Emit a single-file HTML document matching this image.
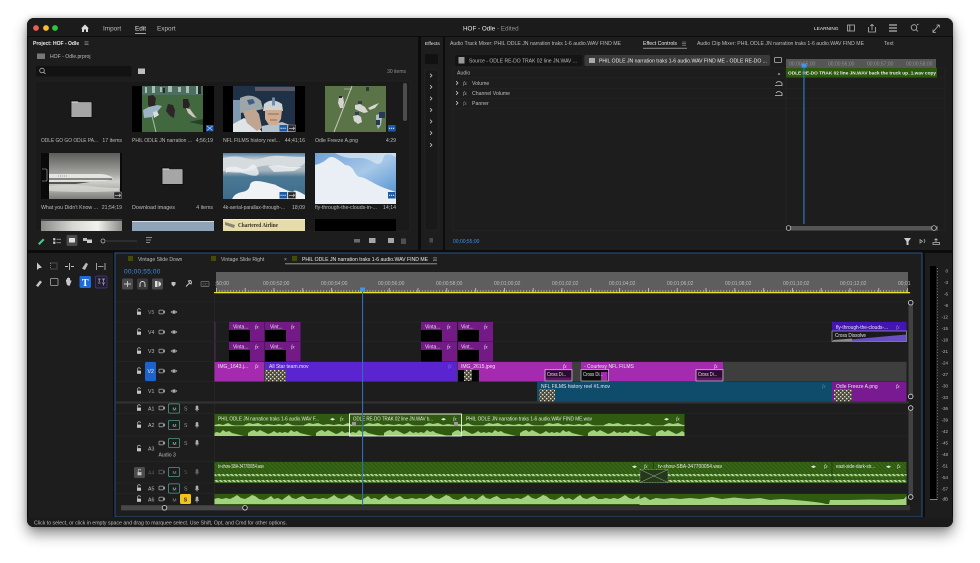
<!DOCTYPE html>
<html><head><meta charset="utf-8"><style>
html,body{margin:0;padding:0;background:#fff;width:980px;height:563px;overflow:hidden}
#win{position:absolute;left:27px;top:18px;width:926px;height:509px;border-radius:7px;background:#0d0d0d;box-shadow:0 7px 14px rgba(0,0,0,.45),0 0 5px rgba(0,0,0,.25)}
svg{position:absolute;left:0;top:0;filter:blur(.28px)}
text{font-family:"Liberation Sans",sans-serif;font-size:5.2px;fill:#bcbcbc;white-space:pre}
.w{fill:#ececec}.d{fill:#909090}.b{fill:#3f8fe6}
.ic{fill:none;stroke:#b5b5b5;stroke-width:.8}
.cl{font-size:5px;fill:#e8e8e8}
</style></head><body><div id="win"></div>
<svg width="980" height="563" viewBox="0 0 980 563" xmlns="http://www.w3.org/2000/svg">
<defs>
<pattern id="tick" width="2.9" height="3" patternUnits="userSpaceOnUse" x="216" y="289"><rect x="0" y="1" width=".6" height="2" fill="#c8c8c8"/></pattern>
<pattern id="tick2" width="28.8" height="4" patternUnits="userSpaceOnUse" x="216" y="288"><rect x="0" y="0" width=".7" height="4" fill="#d4d4d4"/></pattern>
<pattern id="hatch" width="3" height="3" patternUnits="userSpaceOnUse" patternTransform="rotate(-45)"><rect width="3" height="3" fill="#2e5a10"/><rect width="1.2" height="3" fill="#3a6a1a"/></pattern>
<pattern id="hatchL" width="3" height="3" patternUnits="userSpaceOnUse" patternTransform="rotate(-45)"><rect width="3" height="3" fill="#b9d9a0"/><rect width="1.2" height="3" fill="#3f6a20"/></pattern>
<pattern id="wvA" width="68" height="9" patternUnits="userSpaceOnUse" x="214" y="427"><path d="M0 9V6L3 5 6 6 9 3 12 5 15 4 18 6 22 7 26 8 30 9H34V6L37 4 40 3 43 5 46 3 50 5 54 7 57 6 60 4 63 6 66 5 68 6V9Z" fill="#a2d27e"/></pattern>
<pattern id="wvB" width="60" height="4" patternUnits="userSpaceOnUse" x="214" y="422"><path d="M0 4V3L5 2 9 3 14 1 18 3 24 4H30V3L35 1 39 2 44 1 49 3 54 2 60 3V4Z" fill="#a2d27e"/></pattern>
<pattern id="wvC" width="97" height="11" patternUnits="userSpaceOnUse" x="214" y="493"><path d="M0 11V6L4 5 8 6 12 5 16 6 20 4 23 2 27 5 31 6 35 4 38 2 41 3 45 6 50 7 54 5 57 3 60 6 64 5 68 7 72 4 75 2 78 5 82 6 86 4 89 3 93 6 97 6V11Z" fill="#a2d27e"/></pattern>
<pattern id="noise" width="4" height="4" patternUnits="userSpaceOnUse"><rect width="4" height="4" fill="#5c5a4a"/><rect width="1.3" height="1.3" fill="#d8d4c0"/><rect x="2" y="2" width="1.3" height="1.3" fill="#e8e6d8"/><rect x="2.6" y=".3" width="1" height="1" fill="#1c1c18"/><rect x=".3" y="2.6" width="1" height="1" fill="#1c1c18"/></pattern>
<linearGradient id="plane" x1="0" y1="0" x2="0" y2="1"><stop offset="0" stop-color="#5c5c5a"/><stop offset=".45" stop-color="#a4a4a0"/><stop offset=".62" stop-color="#cfcfcb"/><stop offset=".82" stop-color="#a8a8a4"/><stop offset="1" stop-color="#7c7c78"/></linearGradient>
<linearGradient id="sky1" x1="0" y1="0" x2="0" y2="1"><stop offset="0" stop-color="#4d7fa8"/><stop offset=".12" stop-color="#b9c4cc"/><stop offset=".38" stop-color="#a8b4bc"/><stop offset=".52" stop-color="#4b7894"/><stop offset="1" stop-color="#3d6b8c"/></linearGradient>
<linearGradient id="sky2" x1="0" y1="0" x2="1" y2="1"><stop offset="0" stop-color="#6ea2d6"/><stop offset=".5" stop-color="#a8c8e8"/><stop offset="1" stop-color="#4f8fd0"/></linearGradient>
<linearGradient id="strip" x1="0" y1="0" x2="1" y2="0"><stop offset="0" stop-color="#8a8a88"/><stop offset=".4" stop-color="#d8d8d4"/><stop offset=".7" stop-color="#f0f0ec"/><stop offset="1" stop-color="#8a8a88"/></linearGradient>
<g id="lock"><rect x="-2" y="-.4" width="4" height="3.2" fill="#c4c4c4"/><path d="M-1.3 -.4V-2a1.3 1.3 0 0 1 2.6 0" fill="none" stroke="#c4c4c4" stroke-width=".7"/></g>
<g id="cam"><rect x="-3" y="-1.8" width="4.4" height="3.6" rx=".6" fill="none" stroke="#9c9c9c" stroke-width=".8"/><path d="M1.4 -.8L3 -1.6V1.6L1.4 .8Z" fill="#9c9c9c"/></g>
<g id="eye"><path d="M-2.8 0Q0 -2.6 2.8 0Q0 2.6 -2.8 0Z" fill="none" stroke="#c4c4c4" stroke-width=".7"/><circle r="1" fill="#c4c4c4"/></g>
<g id="mic"><rect x="-1.3" y="-3" width="2.6" height="4.2" rx="1.3" fill="#b0b0b0"/><path d="M-2 .4Q0 3 2 .4M0 2V3.2" fill="none" stroke="#b0b0b0" stroke-width=".6"/></g>
<g id="mb"><rect x="-5.5" y="-4.6" width="11" height="9.2" rx="1.2" fill="#1c1c1c" stroke="#4d9a8c" stroke-width=".8"/></g>
<g id="folder"><path d="M0 2.4V.8H7L8 2.4H21V17.4H0Z" fill="#a6a6a6" stroke="#0c0c0c" stroke-width=".8"/><path d="M.6 2.4H20.4" stroke="#e0e0e0" stroke-width=".5"/></g>
<g id="blue"><rect width="7.6" height="6.5" fill="#1b5aa8"/><path d="M1 3.3H6.6" stroke="#cfe2ff" stroke-width="1.2" stroke-dasharray="1.2 .8"/></g>
<g id="blk"><rect width="7.6" height="6.5" fill="#2a2a2a" stroke="#aaa" stroke-width=".4"/><path d="M1 3.3H6.6M5 1.8L6.6 3.3 5 4.8" fill="none" stroke="#ddd" stroke-width=".6"/></g>
<path id="chev" d="M-.9 -1.8L.9 0 -.9 1.8" fill="none" stroke="#c8c8c8" stroke-width=".8"/>
<path id="fxm" d="M0 0H4M0 1.6H4M0 3.2H4" stroke="#9a9a9a" stroke-width=".6"/>
</defs>

<!-- window base -->
<rect x="27" y="18" width="926" height="509" rx="7" fill="#1b1b1b"/>
<!-- panels -->
<rect x="27" y="36" width="926" height="481" fill="#0c0c0c"/>
<rect x="28" y="37" width="390" height="213" fill="#1d1d1d"/>
<rect x="421" y="37" width="22" height="213" fill="#1d1d1d"/>
<rect x="445" y="37" width="507" height="213" fill="#1d1d1d"/>
<rect x="28" y="253" width="85" height="264" fill="#1d1d1d"/>
<rect x="115" y="253" width="807" height="264" fill="#1d1d1d" stroke="#2b5a94" stroke-width=".9"/>
<rect x="925" y="253" width="27" height="264" fill="#1d1d1d"/>
<path d="M27 517H953V520a7 7 0 0 1 -7 7H34a7 7 0 0 1 -7 -7Z" fill="#1b1b1b"/>

<!-- title bar -->
<circle cx="36" cy="28" r="2.9" fill="#ec5f57"/><circle cx="46" cy="28" r="2.9" fill="#f5bd2f"/><circle cx="55" cy="28" r="2.9" fill="#2ac840"/>
<path d="M81 28.5L85 24.5 89 28.5H88V32H86V29.5H84V32H82V28.5Z" fill="#dcdcdc"/>
<text x="103" y="30.3" style="font-size:6.4px">Import</text>
<text x="135" y="30.3" class="w" style="font-size:6.4px">Edit</text><rect x="135" y="33" width="11" height=".7" fill="#ddd"/>
<text x="157" y="30.3" style="font-size:6.4px">Export</text>
<text x="463" y="30.3" class="w" style="font-size:6.3px">HOF - Odle<tspan class="d"> - Edited</tspan></text>
<text x="814" y="30" class="w" style="font-size:4.8px">LEARNING</text>
<rect x="847.5" y="25" width="7" height="6" class="ic"/><path d="M849.8 25V31" class="ic"/>
<path d="M868.5 27V32H875.5V27M872 30V24.5M870.3 26L872 24.3 873.7 26" class="ic"/>
<path d="M889 25H897M889 28H897M889 31H897" stroke="#b5b5b5" stroke-width="1.2"/>
<circle cx="914" cy="27.5" r="2.8" class="ic"/><path d="M916 29.5L918 31.5M917 25L918.5 24" class="ic"/>
<path d="M933 32L939 25M936.5 25H939.3V27.5M933 29.5V32.3H935.8" class="ic"/>

<!-- PROJECT panel -->
<text x="33" y="45" class="w" style="font-weight:bold;font-size:5px">Project: HOF - Odle</text>
<use href="#fxm" x="84.5" y="41.5"/>
<rect x="37" y="53.5" width="8" height="5.5" fill="#777"/>
<text x="50" y="58" style="font-size:5.1px">HOF - Odle.prproj</text>
<rect x="36" y="66" width="95.500" height="10.500" rx="1.500" fill="#121212"/>
<circle cx="42" cy="70.500" r="2.300" class="ic"/><path d="M43.700 72.300L45.500 74" class="ic"/>
<rect x="138" y="68.500" width="7" height="5.500" fill="#bdbdbd"/>
<text x="406" y="73" text-anchor="end" class="d" style="font-size:5px">30 items</text>
<rect x="35" y="81" width="375" height="150" rx="1.500" fill="#1a1a1a" stroke="#262626" stroke-width=".6"/>
<rect x="403" y="83" width="4" height="38" rx="2" fill="#4d4d4d"/>

<!-- row 1 -->
<use href="#folder" x="71" y="100"/>
<rect x="132" y="86" width="82" height="46" fill="#000"/>
<rect x="142" y="86" width="61" height="46" fill="#41683f"/>
<rect x="142" y="86" width="61" height="9" fill="#4c6f62"/>
<path d="M145 87h2v6h-2zM152 86h3v7h-3zM160 87h2v5h-2zM168 86h4v6h-4zM178 87h3v5h-3zM186 86h3v7h-3zM196 86h3v8h-3z" fill="#c4d0c8" opacity=".8"/>
<path d="M198 86h3v8h-3zM163 88h2v5h-2z" fill="#1f2a24"/>
<path d="M148 96l5-1 3 3-1 6 3 3-7 2-3-4z" fill="#2a2422"/>
<path d="M168 104l5 1 2 5-1 8-4-2-4-5z" fill="#2e2626"/>
<path d="M183 99l5 0 2 6-2 4-5-1z" fill="#2a2222"/><path d="M186 108l4 1 5 7 2 2-4-1-5-4z" fill="#ccc6bc"/>
<path d="M143 110l6-3 8-2 5 1-4 5-6 6-8 1z" fill="#9cb4c4"/><path d="M153 112l4-1 2 4-5 3z" fill="#d8dee0"/>
<path d="M152 116l4 16" stroke="#a8c0a8" stroke-width="1"/>
<path d="M189 122l14-3v6z" fill="#2a3f28"/>
<g transform="translate(206,125)"><rect width="7.600" height="6.500" fill="#1b5aa8"/><path d="M1 1L6.500 5.500M6.500 1L1 5.500" stroke="#cfe2ff" stroke-width=".6"/></g>
<text x="132" y="142" style="font-size:5.100px" textLength="60" lengthAdjust="spacingAndGlyphs">PHIL ODLE JN narration ...</text><text x="213" y="142" text-anchor="end">4;56;19</text>
<text x="41" y="142" textLength="57" lengthAdjust="spacingAndGlyphs">ODLE GO GO ODLE PA...</text><text x="122" y="142" text-anchor="end">17 items</text>

<rect x="223" y="86" width="82" height="46" fill="#000"/>
<rect x="233" y="86" width="62" height="46" fill="#1f3146"/>
<rect x="255" y="87" width="40" height="4" fill="#5a5864"/><rect x="233" y="100" width="8" height="32" fill="#7f9ab0"/>
<path d="M233 132V124L244 118 256 124 262 132Z" fill="#dfe4e6"/>
<path d="M262 132V126L282 122 295 127V132Z" fill="#b4c2cc"/>
<path d="M240 98q12-6 21 3l2 8-9 2-14 2z" fill="#9fa6a8"/><path d="M247 100l6-1 2 4-6 2z" fill="#3d5e88"/>
<path d="M243 112l12-3 4 5 3 14-5 3-10-8z" fill="#c0a592"/>
<path d="M264 104q8-7 18 0l1 7h-20z" fill="#cdd2d2"/><path d="M272 97.500h3v8h-3z" fill="#6f8ea8"/>
<path d="M265 110h17l-1 9-4 6h-8l-4-6z" fill="#cfab92"/><path d="M268 114h11M270 120h7" stroke="#7a5a4a" stroke-width=".7"/>
<g transform="translate(288,125)"><use href="#blk"/></g><g transform="translate(279.500,125)"><use href="#blue"/></g>
<text x="223" y="142" textLength="57" lengthAdjust="spacingAndGlyphs">NFL FILMS history reel...</text><text x="305" y="142" text-anchor="end">44;41;16</text>

<rect x="325" y="86" width="61" height="46" fill="#5a7347"/>
<path d="M352 86L334 132" stroke="#c8ccbc" stroke-width="1"/><path d="M344 89h8" stroke="#c8ccbc" stroke-width=".6"/>
<path d="M339 97h4l1 5-1 6h-3l-2-5z" fill="#d4d2ce"/><path d="M339 96h3v2h-3z" fill="#2c2a2a"/>
<path d="M355 105l5-1 5 3 3 5-4 1-5-2-4-2zM353 116l5-1 3 2 1 5-4 2-4-3zM368 108l6-3 5-2-4 5-5 2z" fill="#d8d6d2"/>
<path d="M358 101h4v3h-4zM355 112h4v3h-4z" fill="#34404e"/>
<path d="M376 115l4-1 2 3-1 8-3 4-2-6z" fill="#b4bcc4"/><path d="M379 112h6v6h-6zM376 120h4v5h-4z" fill="#27395a"/>
<path d="M366 87h3v4h-3z" fill="#2a3648"/>
<g transform="translate(388,125)"><use href="#blue"/></g>
<text x="315" y="142" textLength="43" lengthAdjust="spacingAndGlyphs">Odle Freeze A.png</text><text x="396" y="142" text-anchor="end">4:29</text>

<!-- row 2 -->
<rect x="41" y="153" width="81" height="46" fill="#0a0a0a"/>
<rect x="49" y="153" width="71" height="46" fill="url(#plane)"/>
<path d="M49 174H100Q108 174 113 178Q110 181 100 181L49 182Z" fill="#e4e4e0"/><path d="M49 179H112" stroke="#2c2c2c" stroke-width="1.100"/><path d="M58 176h10" stroke="#555" stroke-width=".6" stroke-dasharray="1 1"/>
<path d="M49 182H90l-14 2h-27z" fill="#555"/><path d="M49 186q20-2 40 0t30 2v3q-30 2-70 0z" fill="#dadad6" opacity=".7"/>
<path d="M42 169h4q1 0 1 1v10q0 1-1 1h-4" fill="none" stroke="#bbb" stroke-width=".6"/>
<g transform="translate(114,192)"><use href="#blk"/></g>
<text x="41" y="209" textLength="57" lengthAdjust="spacingAndGlyphs">What you Didn't Know ...</text><text x="122" y="209" text-anchor="end">21;54;19</text>
<use href="#folder" x="162" y="167"/>
<text x="132" y="209" textLength="43" lengthAdjust="spacingAndGlyphs">Download images</text><text x="213" y="209" text-anchor="end">4 items</text>

<rect x="223" y="153" width="82" height="46" fill="url(#sky1)"/>
<path d="M223 158q12-3 22 0t18 0 20-2 22 1v6q-8 8-24 4t-28 2-30 2z" fill="#d6dbde"/>
<path d="M226 168q8-3 14 0t10-2 8 4-12 4-20-1zM268 166q12-2 20 1l14 0-8 4-20 1z" fill="#eef1f2" opacity=".8"/>
<path d="M232 199q3-6 10-7t8-7 14-3 12 3 8 4 10 2 11 4v4z" fill="#eff3f5"/>
<g transform="translate(288,192)"><use href="#blk"/></g><g transform="translate(279.500,192)"><use href="#blue"/></g>
<text x="223" y="209" textLength="62" lengthAdjust="spacingAndGlyphs">4k-aerial-parallax-through-...</text><text x="305" y="209" text-anchor="end">18;09</text>

<rect x="315" y="153" width="81" height="46" fill="url(#sky2)"/>
<path d="M315 165q8-2 12-6t10 0 8 6q6 0 9 6t6 6 10 4 12 6 14 5v12H315z" fill="#e9eff5"/>
<path d="M335 153q10 6 20 5t18 4 10-3 13-2v-4z" fill="#d8e6f2" opacity=".75"/>
<g transform="translate(388,192)"><use href="#blue"/></g>
<text x="315" y="209" textLength="62" lengthAdjust="spacingAndGlyphs">fly-through-the-clouds-in-...</text><text x="396" y="209" text-anchor="end">14;14</text>

<!-- row 3 -->
<rect x="41" y="219" width="81" height="12" fill="url(#strip)"/><rect x="41" y="219" width="81" height="2" fill="#444"/>
<rect x="132" y="221" width="82" height="10" fill="#8fa4b8"/><rect x="132" y="221" width="82" height="1" fill="#d8dde0"/>
<rect x="223" y="219" width="82" height="12" fill="#e6dbab"/><rect x="223" y="219" width="82" height=".8" fill="#f6f2dc"/><path d="M225 222l10 3-1 3-9-3z" fill="#8a8674"/>
<text x="238" y="227" textLength="40" lengthAdjust="spacingAndGlyphs" style="font-family:'Liberation Serif',serif;font-size:6px;font-weight:bold;fill:#3a3226">Chartered Airline</text>
<rect x="315" y="219" width="81" height="12" fill="#000"/>

<!-- project toolbar -->
<path d="M38 243.500L43 238.500 44.500 240 39.500 245Z" fill="#46c98a"/>
<path d="M53.500 238.500h1.500v1.500h-1.500zM53.500 242h1.500v1.500h-1.500zM56.500 239.200h4.500M56.500 242.800h4.500" stroke="#ccc" stroke-width=".7" fill="#ccc"/>
<rect x="66.500" y="235" width="11" height="11" rx="1.500" fill="#4a4a4a"/><rect x="69" y="238" width="6" height="4.500" fill="#e0e0e0"/>
<rect x="83" y="238" width="4" height="3" fill="#bbb"/><rect x="87" y="239.500" width="5" height="3.500" fill="#ccc"/>
<circle cx="103" cy="241" r="2" class="ic"/><path d="M105 241H137" stroke="#4a4a4a" stroke-width=".8"/>
<path d="M146 237.500h6M146 240h5M146 242.500h4" stroke="#aaa" stroke-width=".8"/>
<rect x="354" y="239" width="6" height="3.500" fill="#6a6a6a"/>
<rect x="369" y="238" width="6.500" height="5" fill="#a6a6a6"/><rect x="388" y="238" width="6" height="5" fill="#a6a6a6"/><rect x="401" y="238.500" width="5" height="5.500" fill="#4f4f4f"/>

<!-- EFFECTS -->
<text x="425" y="45" class="w" style="font-size:4.900px">Effects</text>
<rect x="425" y="54" width="13" height="10" rx="1.500" fill="#111"/>
<rect x="425" y="70" width="13" height="160" fill="#191919" stroke="#282828" stroke-width=".5"/>
<use href="#chev" x="431" y="75.500"/><use href="#chev" x="431" y="87"/><use href="#chev" x="431" y="98.500"/><use href="#chev" x="431" y="110"/><use href="#chev" x="431" y="121.500"/><use href="#chev" x="431" y="133"/><use href="#chev" x="431" y="145"/>
<rect x="429.500" y="238" width="3.500" height="4.500" fill="#4a4a4a"/>

<!-- Effect controls tabs -->
<text x="450" y="45" textLength="171" lengthAdjust="spacingAndGlyphs">Audio Track Mixer: PHIL ODLE JN narration traks 1-6 audio.WAV FIND ME</text>
<text x="643" y="45" class="w" textLength="34" lengthAdjust="spacingAndGlyphs">Effect Controls</text><rect x="643" y="47.800" width="44" height=".9" fill="#9a9a9a"/>
<use href="#fxm" x="682" y="42"/>
<text x="697" y="45" textLength="167" lengthAdjust="spacingAndGlyphs">Audio Clip Mixer: PHIL ODLE JN narration traks 1-6 audio.WAV FIND ME</text>
<text x="884" y="45">Text</text>
<rect x="455" y="55" width="127" height="11" rx="1.500" fill="#141414"/>
<rect x="458.500" y="57" width="6" height="6.500" fill="#9a9a9a"/>
<text x="469" y="62.300" textLength="108" lengthAdjust="spacingAndGlyphs">Source - ODLE RE-DO TRAK 02 line JN.WAV ...</text>
<rect x="584.500" y="55" width="185.500" height="11" rx="1.500" fill="#3a3a3a"/>
<rect x="589" y="58" width="6" height="5" fill="#aaa"/>
<text x="599" y="62.300" class="w" textLength="168" lengthAdjust="spacingAndGlyphs">PHIL ODLE JN narration traks 1-6 audio.WAV FIND ME - ODLE RE-DO ...</text>
<rect x="774.500" y="57.500" width="7" height="5" rx=".8" class="ic"/>
<rect x="453" y="68" width="492" height="162.500" fill="none" stroke="#272727" stroke-width=".6"/>
<path d="M786 68V230" stroke="#272727" stroke-width=".6"/>
<rect x="786" y="59" width="150" height="9" fill="#565656"/>
<text x="789" y="65.500" class="d" style="font-size:5px">00;00;55;00</text><text x="828" y="65.500" class="d" style="font-size:5px">00;00;56;00</text><text x="867" y="65.500" class="d" style="font-size:5px">00;00;57;00</text><text x="906" y="65.500" class="d" style="font-size:5px">00;00;58;00</text>
<rect x="786" y="68" width="151" height="9.500" fill="#2b5a0d"/>
<text x="788" y="74.500" class="w" style="font-weight:bold;font-size:4.900px" textLength="148" lengthAdjust="spacingAndGlyphs">ODLE RE-DO TRAK 02 line JN.WAV back the truck up_1.wav copy</text>
<text x="457" y="74.500">Audio</text>
<path d="M777.500 74.500h3l-1.500-1.500z" fill="#ccc"/>
<path d="M453 78H945M453 88.500H945M453 98.500H945M453 108.500H945" stroke="#272727" stroke-width=".6"/>
<use href="#chev" x="457" y="83"/><use href="#chev" x="457" y="93"/><use href="#chev" x="457" y="103"/>
<text x="463" y="85" style="font-family:'Liberation Serif',serif;font-style:italic">fx</text><text x="472" y="85">Volume</text>
<text x="463" y="95" style="font-family:'Liberation Serif',serif;font-style:italic">fx</text><text x="472" y="95">Channel Volume</text>
<text x="463" y="105" class="d" style="font-family:'Liberation Serif',serif;font-style:italic">fx</text><text x="472" y="105">Panner</text>
<path d="M775 85.500h7v-2.500q-3.500-3-6 0M775 95.500h7v-2.500q-3.500-3-6 0" fill="none" stroke="#c8c8c8" stroke-width=".8"/>
<rect x="803.300" y="63" width="1.300" height="161" fill="#2f6fb0"/><rect x="801.500" y="63.500" width="5" height="4" fill="#3f94ee"/>
<rect x="788" y="226" width="150" height="4.500" fill="#555"/><circle cx="788.500" cy="228" r="2.300" fill="#1d1d1d" stroke="#ddd" stroke-width=".7"/><circle cx="934" cy="228" r="2.300" fill="#1d1d1d" stroke="#ddd" stroke-width=".7"/>
<text x="453" y="243" class="b" style="font-size:5px">00;00;55;00</text>
<path d="M904 238H911L908.500 241.500V245H906.500V241.500Z" fill="#ccc"/>
<path d="M920 239.500l2.500 1.800-2.500 1.800zM924 239l1 2-1 2" fill="none" stroke="#bbb" stroke-width=".7"/>
<path d="M933 242.500h6.500v2h-6.500zM936 242v-3M934.500 240.200l1.500-1.500 1.500 1.500" class="ic"/>

<!-- TOOLS -->
<path d="M37 262.500V270L39 268.300 42 267.500Z" fill="#c8c8c8"/>
<path d="M50.500 263v6h6.500v-6z" fill="none" stroke="#999" stroke-width=".7" stroke-dasharray="1 1"/>
<path d="M65 266.500h3M71 266.500h3M69.500 263v7" stroke="#c2c2c2" stroke-width=".9"/>
<path d="M82 268.500L86 262.700 88 264 85 270Z" fill="#bbb"/>
<path d="M96.500 263v7M105 263v7M98 266.500h5.500" stroke="#c2c2c2" stroke-width=".8"/>
<path d="M36 285.500L40 280.500 42 282 38 287Z" fill="#c8c8c8"/>
<rect x="50.500" y="278.500" width="7.500" height="7" rx=".8" fill="none" stroke="#aaa" stroke-width=".8"/>
<path d="M67 285l-1-4v-2l1 1v-2h1v2-2.500h1v2.500-2h1v3l1-1 .5 1-2 5z" fill="#c8c8c8"/>
<rect x="79.500" y="276" width="11.500" height="12" rx="1.500" fill="#2069d8"/><text x="85.200" y="285.800" text-anchor="middle" style="font-family:'Liberation Serif',serif;font-size:10px;font-weight:bold;fill:#fff">T</text>
<rect x="95.500" y="276" width="11.500" height="12" rx="1.500" fill="#221d30" stroke="#4b3a88" stroke-width=".7"/><path d="M98 279h2.500M99.200 279v3M102 279h3M103.500 279v3M98 283h2.500M102 283h3M103.500 283v2.500" stroke="#b5b5c8" stroke-width=".7"/>

<!-- SEQUENCE tabs -->
<rect x="128" y="256" width="5" height="5" fill="#454a08"/><text x="138" y="261" style="font-size:5.100px">Vintage Slide Down</text>
<rect x="211" y="256" width="5" height="5" fill="#454a08"/><text x="221" y="261" style="font-size:5.100px">Vintage Slide Right</text>
<text x="284" y="261" style="font-size:5px">×</text><rect x="292" y="256" width="5" height="5" fill="#454a08"/>
<text x="302" y="261" class="w" textLength="126" lengthAdjust="spacingAndGlyphs">PHIL ODLE JN narration traks 1-6 audio.WAV FIND ME</text>
<use href="#fxm" x="433" y="257.500"/><rect x="285" y="263.500" width="152" height=".7" fill="#c4c4c4"/>

<text x="124" y="273.500" class="b" style="font-size:6.500px;letter-spacing:.2px">00;00;55;00</text>
<rect x="122" y="278.500" width="11" height="11" rx="1.500" fill="#4a4a4a"/><path d="M124 284h7M127.500 281v6" stroke="#ccc" stroke-width=".9"/>
<rect x="137" y="278.500" width="11" height="11" rx="1.500" fill="#3a3a3a"/><path d="M140 287v-3a2.500 2.500 0 0 1 5 0v3" fill="none" stroke="#ddd" stroke-width=".9"/>
<rect x="152" y="278.500" width="11" height="11" rx="1.500" fill="#4a4a4a"/><path d="M155 281h2.500v6H155zM158.500 281L161 283v2l-2.500 2z" fill="#ddd"/>
<path d="M171.500 282h4v2.500l-2 2-2-2z" fill="#c0c0c0"/>
<path d="M186 286.500l3.500-3.500m0 0l-1-2 2-.5 1 1.500-.5 2-1.500-1" stroke="#c8c8c8" stroke-width="1" fill="none"/>
<rect x="201" y="281.500" width="8" height="5" rx=".8" fill="none" stroke="#7e7e7e" stroke-width=".7"/><text x="202.500" y="285.400" class="d" style="font-size:3.500px">CC</text>

<!-- ruler -->
<rect x="216" y="272" width="692" height="20" fill="#5e5e5e"/>
<rect x="216" y="289" width="692" height="3" fill="url(#tick)"/><rect x="216" y="288" width="692" height="4" fill="url(#tick2)"/>
<g><text x="215" y="285" style="font-size:5px">;50;00</text><text x="263" y="285" style="font-size:5px">00;00;52;00</text><text x="321" y="285" style="font-size:5px">00;00;54;00</text><text x="378" y="285" style="font-size:5px">00;00;56;00</text><text x="436" y="285" style="font-size:5px">00;00;58;00</text><text x="494" y="285" style="font-size:5px">00;01;00;02</text><text x="552" y="285" style="font-size:5px">00;01;02;02</text><text x="609" y="285" style="font-size:5px">00;01;04;02</text><text x="667" y="285" style="font-size:5px">00;01;06;02</text><text x="725" y="285" style="font-size:5px">00;01;08;02</text><text x="783" y="285" style="font-size:5px">00;01;10;02</text><text x="840" y="285" style="font-size:5px">00;01;12;02</text><text x="898" y="285" style="font-size:5px">00;01</text></g>
<rect x="214" y="292" width="696" height="1.300" fill="#e8e21c"/>

<!-- track lines -->
<path d="M116 302H907M116 322H907M116 341.500H907M116 361.500H907M116 381.500H907M116 413.500H907M116 436H907M116 461.500H907M116 483H907M116 493.500H907" stroke="#2b2b2b" stroke-width=".6"/>
<rect x="116" y="401.500" width="793" height="2" fill="#323232"/>
<path d="M214.300 293V505" stroke="#2b2b2b" stroke-width=".6"/>

<!-- track headers video -->
<g><use href="#lock" x="139" y="312"/><text x="148" y="314" class="d">V5</text><use href="#cam" x="162" y="312"/><use href="#eye" x="174" y="312"/>
<use href="#lock" x="139" y="332"/><text x="148" y="334">V4</text><use href="#cam" x="162" y="332"/><use href="#eye" x="174" y="332"/>
<use href="#lock" x="139" y="351"/><text x="148" y="353">V3</text><use href="#cam" x="162" y="351"/><use href="#eye" x="174" y="351"/>
<use href="#lock" x="139" y="371"/><rect x="145" y="362" width="11" height="19" rx="1.500" fill="#1e62cc"/><text x="147.500" y="373" class="w">V2</text><use href="#cam" x="162" y="371"/><use href="#eye" x="174" y="371"/>
<use href="#lock" x="139" y="391"/><text x="148" y="393">V1</text><use href="#cam" x="162" y="391"/><use href="#eye" x="174" y="391"/></g>

<!-- track headers audio -->
<g id="au"><use href="#lock" x="139" y="408"/><text x="148" y="410.500">A1</text><use href="#cam" x="162" y="408"/><use href="#mb" x="174" y="408.500"/><text x="172.500" y="410.500" style="font-size:4.800px">M</text><text x="184" y="410.500" class="d">S</text><use href="#mic" x="197" y="408.500"/>
<use href="#lock" x="139" y="425"/><text x="148" y="427">A2</text><use href="#cam" x="162" y="425"/><use href="#mb" x="174" y="425"/><text x="172.500" y="427" style="font-size:4.800px">M</text><text x="184" y="427" class="d">S</text><use href="#mic" x="197" y="425"/>
<use href="#lock" x="139" y="448.500"/><text x="148" y="450.500">A3</text><use href="#cam" x="162" y="443"/><use href="#mb" x="174" y="443"/><text x="172.500" y="445" style="font-size:4.800px">M</text><text x="184" y="445" class="d">S</text><use href="#mic" x="197" y="443"/><text x="158.500" y="456.500" style="font-size:5.100px">Audio 3</text>
<rect x="134" y="467" width="11" height="11" rx="1.500" fill="#4b4b4b"/><use href="#lock" x="139.500" y="472.500"/><text x="148" y="474.500" style="fill:#555">A4</text><g opacity=".5"><use href="#cam" x="162" y="472"/></g><use href="#mb" x="174" y="472"/><text x="172.500" y="474" class="d" style="font-size:4.800px">M</text><text x="184" y="474" style="fill:#555">S</text><g opacity=".5"><use href="#mic" x="197" y="472"/></g>
<use href="#lock" x="139" y="488"/><text x="148" y="490.500">A5</text><use href="#cam" x="162" y="488"/><use href="#mb" x="174" y="488.500"/><text x="172.500" y="490.500" style="font-size:4.800px">M</text><text x="184" y="490.500" class="d">S</text><use href="#mic" x="197" y="488.500"/>
<use href="#lock" x="139" y="499"/><text x="148" y="501.500">A6</text><use href="#cam" x="162" y="499"/><text x="172.500" y="501.500" class="d" style="font-size:4.800px">M</text><rect x="180" y="494" width="11" height="10" rx="1.500" fill="#f0c51e"/><text x="183.700" y="501.300" style="fill:#3c3000;font-weight:bold">S</text><use href="#mic" x="197" y="499.500"/></g>

<!-- V4/V3 clips -->
<g id="vc">
<path d="M215 322V341" stroke="#5c2a66" stroke-width=".8"/><path d="M215 342V361" stroke="#5c2a66" stroke-width=".8"/>
<rect x="229" y="322" width="35.500" height="19.500" fill="#741a86"/><rect x="229" y="330" width="21" height="11.500" fill="#000"/>
<rect x="265" y="322" width="35.500" height="19.500" fill="#741a86"/><rect x="265" y="330" width="21" height="11.500" fill="#000"/>
<rect x="229" y="342" width="35.500" height="19.500" fill="#741a86"/><rect x="229" y="350" width="21" height="11.500" fill="#000"/>
<rect x="265" y="342" width="35.500" height="19.500" fill="#741a86"/><rect x="265" y="350" width="21" height="11.500" fill="#000"/>
<rect x="421" y="322" width="36" height="19.500" fill="#741a86"/><rect x="421" y="330" width="21" height="11.500" fill="#000"/>
<rect x="458" y="322" width="35" height="19.500" fill="#741a86"/><rect x="458" y="330" width="21" height="11.500" fill="#000"/>
<rect x="421" y="342" width="36" height="19.500" fill="#741a86"/><rect x="421" y="350" width="21" height="11.500" fill="#000"/>
<rect x="458" y="342" width="35" height="19.500" fill="#741a86"/><rect x="458" y="350" width="21" height="11.500" fill="#000"/>
</g>
<g class="lb">
<text x="233" y="328.500" class="cl">Vinta...</text><text x="270" y="328.500" class="cl">Vint...</text><text x="425" y="328.500" class="cl">Vinta...</text><text x="461" y="328.500" class="cl">Vint...</text>
<text x="233" y="348.500" class="cl">Vinta...</text><text x="270" y="348.500" class="cl">Vint...</text><text x="425" y="348.500" class="cl">Vinta...</text><text x="461" y="348.500" class="cl">Vint...</text>
</g>
<g>
<text x="255" y="328.500" class="cl" style="font-family:'Liberation Serif',serif;font-style:italic">fx</text><text x="291" y="328.500" class="cl" style="font-family:'Liberation Serif',serif;font-style:italic">fx</text><text x="447" y="328.500" class="cl" style="font-family:'Liberation Serif',serif;font-style:italic">fx</text><text x="484" y="328.500" class="cl" style="font-family:'Liberation Serif',serif;font-style:italic">fx</text>
<text x="255" y="348.500" class="cl" style="font-family:'Liberation Serif',serif;font-style:italic">fx</text><text x="291" y="348.500" class="cl" style="font-family:'Liberation Serif',serif;font-style:italic">fx</text><text x="447" y="348.500" class="cl" style="font-family:'Liberation Serif',serif;font-style:italic">fx</text><text x="484" y="348.500" class="cl" style="font-family:'Liberation Serif',serif;font-style:italic">fx</text>
</g>

<!-- V4 right -->
<rect x="832" y="322" width="74.500" height="9" fill="#4414b4"/>
<text x="836" y="328.800" class="cl" textLength="52" lengthAdjust="spacingAndGlyphs">fly-through-the-clouds-...</text><text x="896" y="328.800" class="cl" style="font-family:'Liberation Serif',serif;font-style:italic;fill:#9a8ad8">fx</text>
<rect x="832" y="331" width="74.500" height="10.500" fill="#1a1a1a" stroke="#d8d8d8" stroke-width=".5"/>
<path d="M833 341H906V334.500Z" fill="#6a4ec4"/><path d="M833 341H852V338.500L833 340Z" fill="#8a8a8a"/>
<text x="835" y="337" class="cl" textLength="31" lengthAdjust="spacingAndGlyphs">Cross Dissolve</text>

<!-- V2 -->
<rect x="214.500" y="362" width="692" height="19.500" fill="#3e3e3e"/>
<rect x="214.500" y="362" width="49.500" height="19.500" fill="#a42bb0"/>
<rect x="265" y="362" width="192" height="19.500" fill="#5a24d0"/>
<rect x="265" y="370" width="21" height="11.500" fill="url(#noise)"/>
<rect x="458" y="362" width="114" height="19.500" fill="#a42bb0"/>
<rect x="458" y="370" width="21" height="11.500" fill="#000"/><rect x="464" y="370" width="8" height="11" fill="url(#noise)"/>
<rect x="581" y="362" width="142" height="19.500" fill="#a42bb0"/>
<text x="218" y="367.800" class="cl">IMG_1643.j...</text><text x="255" y="367.800" class="cl" style="font-family:'Liberation Serif',serif;font-style:italic">fx</text>
<text x="269" y="367.800" class="cl">All Star team.mov</text><text x="448" y="367.800" style="font-family:'Liberation Serif',serif;font-style:italic;fill:#8a70e0;font-size:5px">fx</text>
<text x="461" y="367.800" class="cl">IMG_2615.jpeg</text><text x="563" y="367.800" class="cl" style="font-family:'Liberation Serif',serif;font-style:italic">fx</text>
<text x="584" y="367.800" class="cl">- Courtesy NFL FILMS</text><text x="714" y="367.800" class="cl" style="font-family:'Liberation Serif',serif;font-style:italic">fx</text>
<rect x="545" y="369.500" width="27" height="11.500" fill="#5c1866" stroke="#e0e0e0" stroke-width=".6"/><rect x="546" y="370.500" width="25" height="7" fill="#2b0b30"/><text x="547" y="376" class="cl" textLength="19" lengthAdjust="spacingAndGlyphs">Cross Di...</text>
<rect x="581" y="369.500" width="27.500" height="11.500" fill="#0c0c0c" stroke="#e0e0e0" stroke-width=".6"/><rect x="601" y="372" width="6.500" height="8.500" fill="#a42bb0"/><text x="583" y="376" class="cl" textLength="20" lengthAdjust="spacingAndGlyphs">Cross Di...</text>
<rect x="696" y="369.500" width="27" height="11.500" fill="#5c1866" stroke="#e0e0e0" stroke-width=".6"/><rect x="697" y="370.500" width="25" height="7" fill="#2b0b30"/><text x="698" y="376" class="cl" textLength="19" lengthAdjust="spacingAndGlyphs">Cross Di...</text>

<!-- V1 -->
<rect x="537" y="382" width="295" height="19.500" fill="#0f4b6b"/>
<rect x="539" y="389" width="16" height="12.500" fill="url(#noise)"/>
<text x="541" y="387.800" class="cl">NFL FILMS history reel #1.mov</text><text x="822" y="387.800" style="font-family:'Liberation Serif',serif;font-style:italic;fill:#5a8aa0;font-size:5px">fx</text>
<rect x="832" y="382" width="74.500" height="19.500" fill="#7a1a92"/>
<rect x="834" y="389" width="18" height="12.500" fill="url(#noise)"/>
<text x="836" y="387.800" class="cl">Odle Freeze A.png</text><text x="896" y="387.800" class="cl" style="font-family:'Liberation Serif',serif;font-style:italic">fx</text>

<!-- A2 -->
<rect x="214.500" y="414" width="470" height="22" fill="#2f5a0f"/>
<rect x="214.500" y="422" width="470" height="4" fill="url(#wvB)"/>
<rect x="214.500" y="427" width="470" height="9" fill="url(#wvA)"/>
<path d="M214.500 425.800H684" stroke="#c8c8c8" stroke-width=".7"/>
<text x="218" y="420.500" class="cl" textLength="101" lengthAdjust="spacingAndGlyphs">PHIL ODLE JN narration traks 1-6 audio.WAV F...</text>
<text x="330" y="420.500" class="cl">◂▸</text><text x="340" y="420.500" class="cl" style="font-family:'Liberation Serif',serif;font-style:italic">fx</text>
<rect x="349.500" y="414" width="112" height="22" fill="none" stroke="#f0f0f0" stroke-width=".9"/>
<text x="353" y="420.500" class="cl" textLength="80" lengthAdjust="spacingAndGlyphs">ODLE RE-DO TRAK 02 line JN.WAV b...</text>
<text x="441" y="420.500" class="cl">◂▸</text><text x="453" y="420.500" class="cl" style="font-family:'Liberation Serif',serif;font-style:italic">fx</text>
<rect x="352" y="422" width="4" height="4" fill="#999"/><rect x="454" y="422" width="4" height="4" fill="#999"/>
<text x="466" y="420.500" class="cl" textLength="126" lengthAdjust="spacingAndGlyphs">PHIL ODLE JN narration traks 1-6 audio.WAV FIND ME.wav</text>
<text x="664" y="420.500" class="cl">◂▸</text><text x="676" y="420.500" class="cl" style="font-family:'Liberation Serif',serif;font-style:italic">fx</text>

<!-- A4 -->
<rect x="214.500" y="462" width="692" height="21" fill="url(#hatch)"/>
<rect x="214.500" y="474" width="692" height="2.200" fill="url(#hatchL)"/>
<rect x="214.500" y="480" width="692" height="2.200" fill="url(#hatchL)"/>
<text x="218" y="467.800" class="cl" textLength="46" lengthAdjust="spacingAndGlyphs">tv-show-SBA-347700054.wav</text>
<text x="632" y="467.800" class="cl">◂▸</text><text x="644" y="467.800" class="cl" style="font-family:'Liberation Serif',serif;font-style:italic">fx</text>
<path d="M653.500 462V483" stroke="#1d2d10" stroke-width=".6"/>
<text x="658" y="467.800" class="cl" textLength="64" lengthAdjust="spacingAndGlyphs">tv-show-SBA-347700054.wav</text>
<text x="811" y="467.800" class="cl">◂▸</text><text x="824" y="467.800" class="cl" style="font-family:'Liberation Serif',serif;font-style:italic">fx</text>
<rect x="640" y="469.500" width="28" height="13" fill="#24381a" stroke="#b8b8b8" stroke-width=".5" stroke-dasharray="1 .6"/><path d="M640 469.500L668 482.500M640 482.500L668 469.500" stroke="#ccc" stroke-width=".4"/>
<path d="M832 462V483" stroke="#1a2a0e" stroke-width=".6"/>
<text x="836" y="467.800" class="cl" textLength="39" lengthAdjust="spacingAndGlyphs">east-side-dark-str...</text>
<text x="886" y="467.800" class="cl">◂▸</text><text x="897" y="467.800" class="cl" style="font-family:'Liberation Serif',serif;font-style:italic">fx</text>

<!-- A6 -->
<rect x="214.500" y="494" width="692" height="11" fill="#2f5a0f"/>
<rect x="214.500" y="494" width="425" height="11" fill="url(#wvC)"/>
<path d="M639.500 505V499L645 497 650 500 656 498 664 499 672 498 680 499 690 498 700 499 712 497 722 499 734 497.500 748 499 760 498 770 500 782 499 795 500 806 501 815 502 822 503 826 504H829L830 500 850 500 870 499.500 890 500 904 499 906.500 496V505Z" fill="#a2d27e"/>

<!-- playhead -->
<rect x="362" y="288" width="1.100" height="217" fill="#2f6eb2"/>
<rect x="360" y="287.500" width="5" height="4" fill="#3f94ee"/>

<!-- scrollbars -->
<rect x="908.500" y="301" width="4.500" height="97" rx="2" fill="#424242"/>
<rect x="908.500" y="406" width="4.500" height="93" rx="2" fill="#424242"/>
<circle cx="910.700" cy="302.700" r="2.300" fill="#1d1d1d" stroke="#ddd" stroke-width=".8"/><circle cx="910.700" cy="396.500" r="2.300" fill="#1d1d1d" stroke="#ddd" stroke-width=".8"/><circle cx="910.700" cy="408" r="2.300" fill="#1d1d1d" stroke="#ddd" stroke-width=".8"/><circle cx="910.700" cy="497" r="2.300" fill="#1d1d1d" stroke="#ddd" stroke-width=".8"/>
<rect x="121" y="505.300" width="789" height="5" fill="#333"/><rect x="121" y="505.300" width="124" height="5" fill="#484848"/>
<circle cx="164.500" cy="507.800" r="2.300" fill="#1d1d1d" stroke="#ddd" stroke-width=".8"/><circle cx="245" cy="507.800" r="2.300" fill="#1d1d1d" stroke="#ddd" stroke-width=".8"/>

<!-- meters -->
<rect x="930" y="266" width="6" height="234" fill="#000"/>
<path d="M937.500 268V498" stroke="#8a8a8a" stroke-width=".8" stroke-dasharray="1 1.900"/>
<path d="M930 499.500H937.500" stroke="#c8b21a" stroke-width=".8"/>
<g>
<text x="948" y="272.500" text-anchor="end" style="font-size:4.500px">0</text><text x="948" y="284" text-anchor="end" style="font-size:4.500px">-3</text><text x="948" y="295.500" text-anchor="end" style="font-size:4.500px">-6</text><text x="948" y="307" text-anchor="end" style="font-size:4.500px">-9</text><text x="948" y="318.500" text-anchor="end" style="font-size:4.500px">-12</text><text x="948" y="330" text-anchor="end" style="font-size:4.500px">-15</text><text x="948" y="341.500" text-anchor="end" style="font-size:4.500px">-18</text><text x="948" y="353" text-anchor="end" style="font-size:4.500px">-21</text><text x="948" y="364.500" text-anchor="end" style="font-size:4.500px">-24</text><text x="948" y="376" text-anchor="end" style="font-size:4.500px">-27</text><text x="948" y="387.500" text-anchor="end" style="font-size:4.500px">-30</text><text x="948" y="399" text-anchor="end" style="font-size:4.500px">-33</text><text x="948" y="410" text-anchor="end" style="font-size:4.500px">-36</text><text x="948" y="421.500" text-anchor="end" style="font-size:4.500px">-39</text><text x="948" y="433" text-anchor="end" style="font-size:4.500px">-42</text><text x="948" y="444.500" text-anchor="end" style="font-size:4.500px">-45</text><text x="948" y="456" text-anchor="end" style="font-size:4.500px">-48</text><text x="948" y="467.500" text-anchor="end" style="font-size:4.500px">-51</text><text x="948" y="479" text-anchor="end" style="font-size:4.500px">-54</text><text x="948" y="490.500" text-anchor="end" style="font-size:4.500px">-57</text><text x="948" y="500.500" text-anchor="end" style="font-size:4.500px">dB</text>
</g>

<!-- status -->
<text x="34" y="524.300" style="font-size:5.100px" textLength="253" lengthAdjust="spacingAndGlyphs">Click to select, or click in empty space and drag to marquee select. Use Shift, Opt, and Cmd for other options.</text>
</svg>
</body></html>
